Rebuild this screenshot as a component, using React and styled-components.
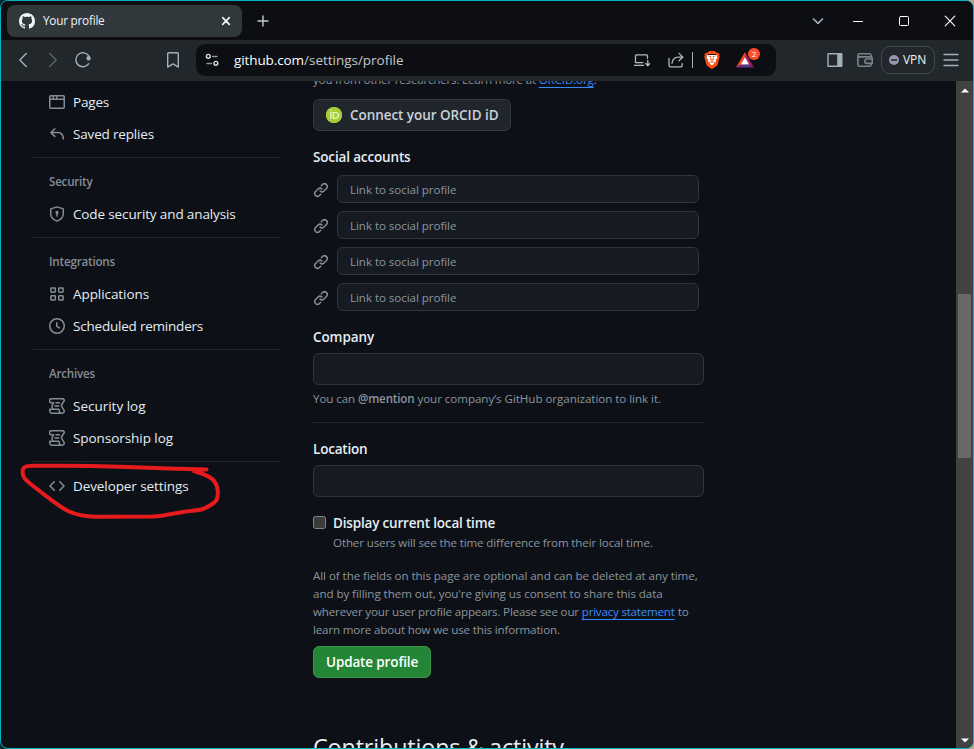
import React from "react";
import styled, { createGlobalStyle } from "styled-components";
import { SiBrave, SiOrcid } from "react-icons/si";

const GlobalStyle = createGlobalStyle`
  * { box-sizing: border-box; }
  html, body { margin: 0; padding: 0; background: #0d1117; overflow: hidden; }
  body { font-family: "Open Sans", "Noto Sans", sans-serif; font-size: 13.5px; color: #e6edf3; }
`;

const Backdrop = styled.div`
  width: 974px;
  height: 749px;
  background: linear-gradient(90deg, #0a2a30 50%, #b9a58a 50%);
`;
const Window = styled.div`
  position: relative;
  display: flex;
  flex-direction: column;
  width: 974px;
  height: 749px;
  border: 1px solid #00b4c0;
  border-radius: 8px;
  background: #0d1117;
  overflow: hidden;
`;
const Text = styled.span`
  letter-spacing: ${(p) => p.$ls || 0}px;
  white-space: pre;
`;

/* Browser chrome */
const TitleBar = styled.div`
  display: flex;
  align-items: center;
  flex: 0 0 39px;
  background: #0c0e13;
  padding-left: 6px;
`;
const Tab = styled.div`
  display: flex;
  align-items: center;
  width: 235px;
  height: 32px;
  margin-right: 6px;
  padding: 0 8px 0 12px;
  border-radius: 8px;
  background: #30383c;
  color: #f1f3f5;
  font-size: 11.8px;
`;
const TabLabel = styled(Text)`
  flex: 1;
  margin: -1px 0 0 8px;
`;
const Slot = styled.div`
  display: flex;
  align-items: center;
  justify-content: center;
  flex: 0 0 ${(p) => p.$w || 30}px;
  height: 30px;
  color: ${(p) => p.$color || "#a3b1b8"};
`;
const Spacer = styled.div`
  flex: ${(p) => (p.$w ? `0 0 ${p.$w}px` : "1 1 0")};
`;
const Toolbar = styled.div`
  display: flex;
  align-items: center;
  flex: 0 0 41px;
  padding-left: 7px;
  padding-bottom: 1px;
  background: #22272b;
`;
const AddressBar = styled.div`
  display: flex;
  align-items: center;
  width: 580px;
  height: 32px;
  margin-left: 8px;
  padding-left: 8px;
  border-radius: 9px;
  background: #0c0e13;
`;
const Url = styled.div`
  flex: 1;
  margin-left: 14px;
  color: #c3c7ca;
`;
const Host = styled(Text)`
  color: #ffffff;
`;
const BarRule = styled.div`
  width: 1px;
  height: 16px;
  margin: 0 4px 0 -1px;
  background: #a9b0b4;
`;
const RewardSlot = styled.div`
  position: relative;
  display: flex;
  align-items: center;
  width: 40px;
  height: 30px;
  margin-left: 9px;
`;
const Badge = styled.div`
  position: absolute;
  left: 12px;
  top: 3px;
  display: flex;
  align-items: center;
  justify-content: center;
  width: 12px;
  height: 12px;
  border-radius: 50%;
  background: #fb4f2b;
  color: #fff;
  font-size: 8px;
  line-height: 12px;
`;
const VpnPill = styled.div`
  display: flex;
  align-items: center;
  gap: 4px;
  width: 54px;
  height: 28px;
  margin: 0 1px;
  padding: 0 0 1px 7px;
  border: 1px solid #3e4a4c;
  border-radius: 9px;
  color: #f2f4f5;
  font-size: 12px;
`;

/* Page */
const Page = styled.div`
  display: flex;
  flex: 1;
  min-height: 0;
  overflow: hidden;
`;
const Sidebar = styled.nav`
  width: 248px;
  margin-left: 32px;
  padding-top: 5px;
`;
const NavItem = styled.div`
  display: flex;
  align-items: center;
  gap: 8px;
  height: 32px;
  padding-left: 16px;
  color: #e6edf3;

  svg { color: #848d97; }
`;
const NavHeading = styled.div`
  height: 32px;
  padding-left: 16px;
  color: #848d97;
  font-size: 11.6px;
  font-weight: 600;
  line-height: 32px;
`;
const Rule = styled.div`
  height: 1px;
  margin: ${(p) => p.$m || "7px 0 8px"};
  background: #23282f;
`;
const Main = styled.main`
  width: 391px;
  margin-left: 32px;
`;
const Note = styled.div`
  height: ${(p) => (p.$lines || 1) * 18}px;
  margin-top: ${(p) => p.$top || 0}px;
  padding-left: ${(p) => p.$indent || 0}px;
  color: #8b949e;
  font-size: 11.6px;
  line-height: 18px;
`;
const Link = styled(Text)`
  color: #388bfd;
  text-decoration: underline;
  text-underline-offset: 3px;
  text-decoration-thickness: 1px;
`;
const Strong = styled(Text)`
  font-weight: 600;
`;
const Button = styled.button`
  display: flex;
  align-items: center;
  gap: 8px;
  width: ${(p) => p.$w}px;
  height: 32px;
  margin: ${(p) => p.$top}px 0 0;
  padding: 0 12px;
  border: 1px solid ${(p) => (p.$primary ? "#3a9349" : "#343941")};
  border-radius: 6px;
  background: ${(p) => (p.$primary ? "#238636" : "#21262d")};
  color: ${(p) => (p.$primary ? "#fff" : "#c9d1d9")};
  font: 600 13.5px/20px "Open Sans", sans-serif;
`;
const OrcidBadge = styled.span`
  display: flex;
  width: 16px;
  height: 16px;
  border-radius: 50%;
  background: radial-gradient(#fff 60%, #a6ce39 62%);
  color: #a6ce39;
`;
const Label = styled.div`
  height: 21px;
  margin-top: ${(p) => (p.$top === undefined ? 16 : p.$top)}px;
  font-weight: 600;
  line-height: 21px;
`;
const SocialList = styled.div`
  display: flex;
  flex-direction: column;
  gap: 8px;
  margin-top: 7px;
`;
const SocialRow = styled.div`
  display: flex;
  align-items: center;
  gap: 8px;
  color: #848d97;

  > svg { margin-top: 2px; }
`;
const Field = styled.div`
  width: ${(p) => p.$w || 391}px;
  height: ${(p) => p.$h || 32}px;
  margin-top: ${(p) => p.$top || 0}px;
  padding: 0 12px;
  border: 1px solid #30363d;
  border-radius: 6px;
  background: #161b22;
  color: #8b949e;
  font-size: 11.6px;
  line-height: 28px;
`;
const CheckRow = styled.div`
  display: flex;
  align-items: center;
  gap: 7px;
  height: 21px;
  margin-top: 16px;
`;
const Checkbox = styled.span`
  width: 13px;
  height: 13px;
  margin-bottom: 2px;
  border: 1px solid #858585;
  border-radius: 2.5px;
  background: #3b3b3b;
`;
const SectionTitle = styled.h2`
  margin: 53px 0 0;
  font-size: 23.4px;
  font-weight: 400;
  line-height: 32px;
`;
const Scrollbar = styled.div`
  display: flex;
  flex-direction: column;
  align-items: center;
  width: 17px;
  margin-left: auto;
  padding: 7px 0 5px;
  background: #424242;
  color: #fff;
`;
const Thumb = styled.div`
  width: 13px;
  height: 164px;
  margin: 201px 0 auto;
  background: #686868;
`;
const Scribble = styled.svg`
  position: absolute;
  left: -1px;
  top: -1px;
  pointer-events: none;
`;

const Svg = ({ w = 16, h = 16, sw = 1.5, children }) => (
  <svg width={w} height={h} viewBox={`0 0 ${w} ${h}`} fill="none" stroke="currentColor"
    strokeWidth={sw} strokeLinecap="round" strokeLinejoin="round">
    {children}
  </svg>
);
const Solid = ({ d }) => (
  <svg width="16" height="16" viewBox="0 0 16 16" fill="currentColor"><path d={d} /></svg>
);

const LINK = "m7.775 3.275 1.25-1.25a3.5 3.5 0 1 1 4.95 4.95l-2.5 2.5a3.5 3.5 0 0 1-4.95 0 .751.751 0 0 1 .018-1.042.751.751 0 0 1 1.042-.018 1.998 1.998 0 0 0 2.83 0l2.5-2.5a2.002 2.002 0 0 0-2.83-2.83l-1.25 1.25a.751.751 0 0 1-1.042-.018.751.751 0 0 1-.018-1.042Zm-4.69 9.64a1.998 1.998 0 0 0 2.83 0l1.25-1.25a.751.751 0 0 1 1.042.018.751.751 0 0 1 .018 1.042l-1.25 1.25a3.5 3.5 0 1 1-4.95-4.95l2.5-2.5a3.5 3.5 0 0 1 4.95 0 .751.751 0 0 1-.018 1.042.751.751 0 0 1-1.042.018 1.998 1.998 0 0 0-2.83 0l-2.5 2.5a1.998 1.998 0 0 0 0 2.83Z";
const CODE = "m11.28 3.22 4.25 4.25a.75.75 0 0 1 0 1.06l-4.25 4.25a.749.749 0 0 1-1.275-.326.749.749 0 0 1 .215-.734L13.94 8l-3.72-3.72a.749.749 0 0 1 .326-1.275.749.749 0 0 1 .734.215Zm-6.56 0a.751.751 0 0 1 1.042.018.751.751 0 0 1 .018 1.042L2.06 8l3.72 3.72a.749.749 0 0 1-.326 1.275.749.749 0 0 1-.734-.215L.47 8.53a.75.75 0 0 1 0-1.06Z";
const GITHUB = "M8 0c4.42 0 8 3.58 8 8a8.013 8.013 0 0 1-5.45 7.59c-.4.08-.55-.17-.55-.38 0-.27.01-1.13.01-2.2 0-.75-.25-1.23-.54-1.48 1.78-.2 3.65-.88 3.65-3.95 0-.88-.31-1.59-.82-2.15.08-.2.36-1.02-.08-2.12 0 0-.67-.22-2.2.82-.64-.18-1.32-.27-2-.27-.68 0-1.36.09-2 .27-1.53-1.03-2.2-.82-2.2-.82-.44 1.1-.16 1.92-.08 2.12-.51.56-.82 1.28-.82 2.15 0 3.06 1.86 3.75 3.64 3.95-.23.2-.44.55-.51 1.07-.46.21-1.61.55-2.33-.66-.15-.24-.6-.83-1.23-.82-.67.01-.27.38.01.53.34.19.73.9.82 1.13.16.45.68 1.31 2.69.94 0 .67.01 1.3.01 1.49 0 .21-.15.45-.55.38A7.995 7.995 0 0 1 0 8c0-4.42 3.58-8 8-8Z";

const BrowserIcon = () => (
  <Svg><rect x=".75" y="1.75" width="14.5" height="12.5" rx="1" /><path d="M1 5.25h14M4.25 2v3M7.75 2v3" strokeWidth="1.4" /></Svg>
);
const ReplyIcon = () => (
  <Svg><path d="M5.8 2.8 2 6.6l3.8 3.8M2.3 6.6h6.2c3.6 0 5.75 2.2 5.75 6.4" /></Svg>
);
const ShieldIcon = () => (
  <Svg><path d="M8 .9 14.25 2.9V8c0 3.2-2.4 5.6-6.25 7.1C4.15 13.6 1.75 11.2 1.75 8V2.9Z" /><path d="M8 6.5v3.6" /><circle cx="8" cy="6.4" r=".8" fill="currentColor" /></Svg>
);
const AppsIcon = () => (
  <Svg>
    <rect x="1.9" y="1.9" width="4.4" height="4.4" rx=".7" /><rect x="9.7" y="1.9" width="4.4" height="4.4" rx=".7" />
    <rect x="1.9" y="9.7" width="4.4" height="4.4" rx=".7" /><rect x="9.7" y="9.7" width="4.4" height="4.4" rx=".7" />
  </Svg>
);
const ClockIcon = () => (
  <Svg><circle cx="8" cy="8" r="7.25" /><path d="M7.75 4.75v3.6l2.7 1.5" /></Svg>
);
const LogIcon = () => (
  <Svg>
    <path d="M4.4 4.75H2.5a1.75 1.75 0 0 1 0-4h11a1.6 1.6 0 0 1 1.4 2.6l-2 2.9c-.5.8-.5 1.6-.1 2.4l2.1 3.4a2.1 2.1 0 0 1-1.8 3.2H2.8C1 15.25.7 13.4.75 11.25h8.8c.3 0 .6.3.6.7 0 1.6.8 3.3 2.6 3.3" />
    <path d="M4.7 4.9 3.3 7.1c-.5.9-.5 1.6-.1 2.4l.8 1.6M7 4.75h3.5M6 8h3.8" />
  </Svg>
);

const NAV = [
  { items: [[BrowserIcon, "Pages", -0.19], [ReplyIcon, "Saved replies", -0.166]] },
  { heading: ["Security", -0.218], items: [[ShieldIcon, "Code security and analysis", -0.134]] },
  { heading: ["Integrations", -0.19], items: [[AppsIcon, "Applications", -0.073], [ClockIcon, "Scheduled reminders", -0.213]] },
  { heading: ["Archives", -0.198], items: [[LogIcon, "Security log", -0.006], [LogIcon, "Sponsorship log", -0.057]] },
  { items: [[() => <Solid d={CODE} />, "Developer settings", -0.092]] },
];

function BrowserChrome() {
  return (
    <>
      <TitleBar>
        <Tab>
          <Solid d={GITHUB} />
          <TabLabel $ls={-0.25}>Your profile</TabLabel>
          <Svg sw={1.7}><path d="M4.7 4.7l6.6 6.6M11.3 4.7l-6.6 6.6" /></Svg>
        </Tab>
        <Slot $color="#c3c7ca"><Svg sw={1.4}><path d="M8 3v10M3 8h10" /></Svg></Slot>
        <Spacer />
        <Slot $w={34}><Svg sw={1.7}><path d="M3.5 6 8 10.3 12.5 6" /></Svg></Slot>
        <Slot $w={46} $color="#fff"><Svg sw={1}><path d="M3.5 8.5h9" /></Svg></Slot>
        <Slot $w={46} $color="#fff"><Svg sw={1}><rect x="3.5" y="3.5" width="9" height="9" rx="1" /></Svg></Slot>
        <Slot $w={46} $color="#fff"><Svg sw={1.1}><path d="M3.2 3.2l9.6 9.6M12.8 3.2l-9.6 9.6" /></Svg></Slot>
      </TitleBar>
      <Toolbar>
        <Slot><Svg sw={1.4}><path d="M11.3 1.5 4.8 8l6.5 6.5" /></Svg></Slot>
        <Slot $color="#596267"><Svg sw={1.4}><path d="M4.7 1.5 11.2 8l-6.5 6.5" /></Svg></Slot>
        <Slot><Svg sw={1.4}><path d="M13.6 11.8A7 7 0 1 1 13.9 4.2" /><circle cx="13.6" cy="6.3" r="1.5" fill="currentColor" /></Svg></Slot>
        <Spacer $w={60} />
        <Slot><Svg sw={1.4}><path d="M2.7 1.7q0-1 1-1h8.6q1 0 1 1v13.4L8 11.8l-5.3 3.3Z" /></Svg></Slot>
        <AddressBar>
          <Slot $w={16} $color="#dcdfe1">
            <Svg sw={1.4}><circle cx="4.3" cy="4.3" r="1.9" /><path d="M8.6 4.5H13" stroke="#8e9498" /><circle cx="11.9" cy="11.3" r="1.9" /><path d="M3 11.5h4.6" stroke="#8e9498" /></Svg>
          </Slot>
          <Url><Host $ls={-0.098}>github.com</Host><Text $ls={-0.018}>/settings/profile</Text></Url>
          <Slot $w={34} $color="#b3babd">
            <Svg sw={1.3}><path d="M1.5 10V3.7q0-.9.9-.9h10.2q.9 0 .9.9v2.5M.3 13.4H9.5M1.5 10.6H9M13.8 8.3v5.2M11.8 11.5l2 2.2 2-2.2" /></Svg>
          </Slot>
          <Slot $w={34} $color="#b3babd">
            <Svg sw={1.3}><path d="M1 6.5v6.8q0 1.6 1.6 1.6h10q1.6 0 1.6-1.6v-1.7M4 11.3c.4-4 3-6.2 6.6-6.2h4M11 1.4l3.9 3.7L11 8.8" /></Svg>
          </Slot>
          <BarRule />
          <Slot $w={30} $color="#fb4f14">
            <svg width="18" height="18" viewBox="0 0 18 18">
              <path d="M4 4h10l1 4-3 6-3 2-3-2-3-6Z" fill="#fff" />
              <SiBrave size={18} />
            </svg>
          </Slot>
          <RewardSlot>
            <svg width="20" height="30" viewBox="1 0 20 30">
              <path d="M10 7 1 22.500 6.200 19.500 10 12.500Z" fill="#ff4724" />
              <path d="M10 7v5.500l3.800 7 5.200 3Z" fill="#9e1f63" />
              <path d="M1 22.500h18l-5.200-3H6.200Z" fill="#662d91" />
              <path d="M10 12.300 5.900 19.600h8.200Z" fill="#fff" />
            </svg>
            <Badge>2</Badge>
          </RewardSlot>
        </AddressBar>
        <Spacer $w={44} />
        <Slot><Svg sw={1.4}><rect x="1" y="1.7" width="13.8" height="12.6" rx=".5" /><path d="M10.2 2h4.5v12h-4.5Z" fill="currentColor" stroke="none" /></Svg></Slot>
        <Slot $color="#79858a"><Svg sw={1.6}><path d="M14 4.800V3.200q0-1.500-1.500-1.500H2.300Q.9 1.700.9 3.200v9.600q0 1.500 1.500 1.500h10.100q1.500 0 1.500-1.500v-1.200M1 4.900h13q1.200 0 1.200 1v5.500H10a2.200 2.200 0 1 1 0-4.400h5" /></Svg></Slot>
        <VpnPill>
          <svg width="10" height="10" viewBox="0 0 10 10"><circle cx="5" cy="5" r="5" fill="#9695ad" /><path d="M2 5h6" stroke="#22272b" strokeWidth="1.5" /></svg>
          <Text $ls={-0.1}>VPN</Text>
        </VpnPill>
        <Slot><Svg sw={1.3}><path d="M1 2.5h14M1 8h14M1 13.5h14" /></Svg></Slot>
      </Toolbar>
    </>
  );
}

export default function App() {
  return (
    <Backdrop>
      <GlobalStyle />
      <Window>
        <BrowserChrome />
        <Page>
          <Sidebar>
            {NAV.map((group, i) => (
              <React.Fragment key={i}>
                {i > 0 && <Rule />}
                {group.heading && <NavHeading><Text $ls={group.heading[1]}>{group.heading[0]}</Text></NavHeading>}
                {group.items.map(([Icon, name, ls]) => (
                  <NavItem key={name}><Icon /><Text $ls={ls}>{name}</Text></NavItem>
                ))}
              </React.Fragment>
            ))}
          </Sidebar>
          <Main>
            <Note $top={-10}>
              <Text $ls={-0.2}>you from other researchers. Learn more at </Text>
              <Link $ls={-0.137}>ORCID.org</Link>.
            </Note>
            <Button $w={198} $top={10}>
              <OrcidBadge><SiOrcid size={16} /></OrcidBadge>
              <Text $ls={-0.052}>Connect your ORCID iD</Text>
            </Button>
            <Label><Text $ls={-0.15}>Social accounts</Text></Label>
            <SocialList>
              {[1, 2, 3, 4].map((n) => (
                <SocialRow key={n}>
                  <Solid d={LINK} />
                  <Field $w={362} $h={28}><Text $ls={-0.06}>Link to social profile</Text></Field>
                </SocialRow>
              ))}
            </SocialList>
            <Label><Text $ls={-0.1}>Company</Text></Label>
            <Field $top={5} />
            <Note $top={5}>
              <Text $ls={-0.09}>{"You can "}</Text>
              <Strong $ls={-0.164}>@mention</Strong>
              <Text $ls={-0.05}>{" your company’s GitHub organization to link it."}</Text>
            </Note>
            <Rule $m="14px 0 0" />
            <Label><Text $ls={-0.19}>Location</Text></Label>
            <Field $top={5} />
            <CheckRow>
              <Checkbox />
              <Label $top={0}><Text $ls={-0.18}>Display current local time</Text></Label>
            </CheckRow>
            <Note $indent={20}><Text $ls={-0.133}>Other users will see the time difference from their local time.</Text></Note>
            <Note $lines={4} $top={15}>
              <Text $ls={-0.067}>All of the fields on this page are optional and can be deleted at any time,</Text><br />
              <Text $ls={-0.067}>and by filling them out, you're giving us consent to share this data</Text><br />
              <Text $ls={-0.176}>{"wherever your user profile appears. Please see our "}</Text>
              <Link $ls={-0.217}>privacy statement</Link> to<br />
              <Text $ls={-0.159}>learn more about how we use this information.</Text>
            </Note>
            <Button $primary $w={118} $top={7}><Text $ls={-0.138}>Update profile</Text></Button>
            <SectionTitle><Text $ls={-0.158}>Contributions &amp; activity</Text></SectionTitle>
          </Main>
          <Scrollbar>
            <svg width="8" height="5" viewBox="0 0 8 5"><path d="M0 4.5 4 .5l4 4Z" fill="currentColor" /></svg>
            <Thumb />
            <svg width="8" height="5" viewBox="0 0 8 5"><path d="M0 .5 4 4.5l4-4Z" fill="currentColor" /></svg>
          </Scrollbar>
        </Page>
        <Scribble width="974" height="749" viewBox="0 0 974 749">
          <path d="M206.5 469.4 C195 469.2 186 469 176.7 468.7 L120 466.7 C100 466 80 465.7 63 465.7 L33 465.7 C25 465.7 22.5 467.5 22.6 472 C22.7 477 25 479.5 30 483.5 L46.7 496.5 C54 502 60 507 68 511 C77 515.5 86 516.6 96.5 516.7 L153 516.6 C164 516 173 513.5 183 512 C190 510.8 198 510.5 203 509 C210 506 214 503.5 216.5 500 C218.5 496 218 494 217.5 489 C216.5 483.5 215 481 211.5 478.5 C206 474.5 200 472.8 193.5 470.9"
            fill="none" stroke="#e61b1d" strokeWidth="4" strokeLinecap="round" strokeLinejoin="round" />
        </Scribble>
      </Window>
    </Backdrop>
  );
}
